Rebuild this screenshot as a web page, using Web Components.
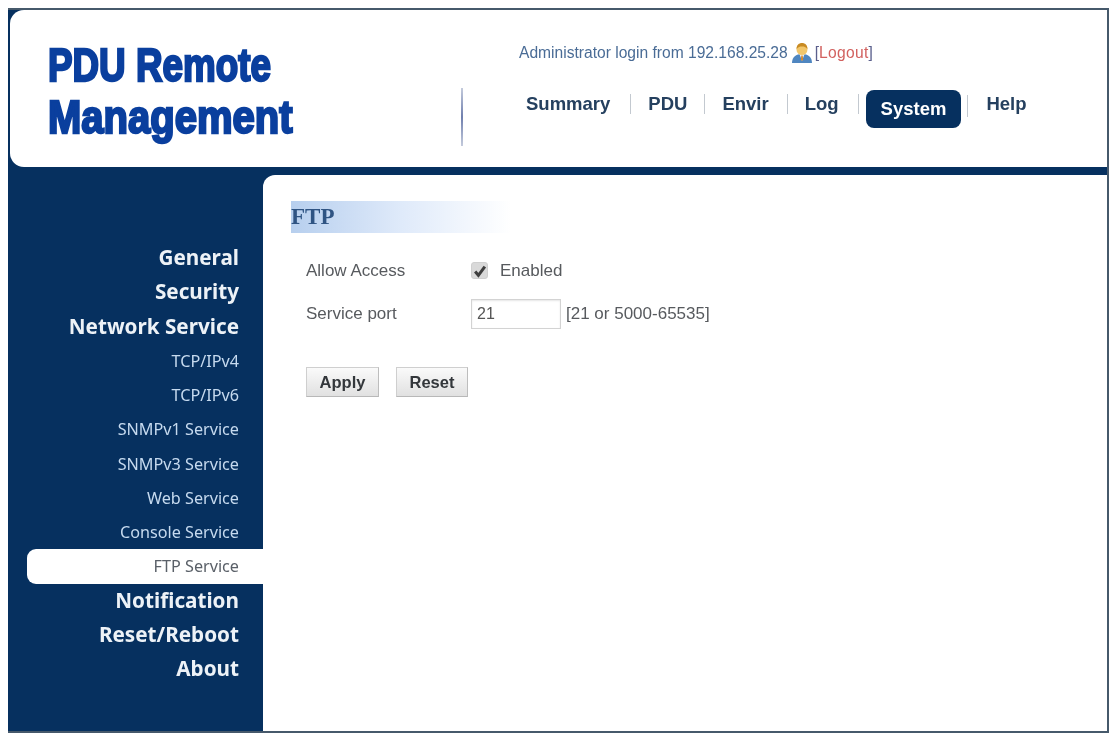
<!DOCTYPE html>
<html lang="en"><head><meta charset="utf-8"><title>PDU Remote Management</title>
<style>
html{overflow:hidden;background:#fff}
body{margin:8px 3px 0 8px;background:#fff}
</style></head><body>
<pdu-app>
  <pdu-header slot="header">
    <span slot="title" style="--sx:.8">PDU Remote</span><span slot="title" style="--sx:.87">Management</span>
    <pdu-login slot="login"></pdu-login>
    <pdu-nav slot="nav">
      <nav-link style="--ml:20px">Summary</nav-link><nav-link style="--ml:17px">PDU</nav-link><nav-link style="--ml:18px">Envir</nav-link><nav-link style="--ml:19px">Log</nav-link><nav-link active>System</nav-link><nav-link>Help</nav-link>
    </pdu-nav>
  </pdu-header>
  <pdu-sidebar slot="sidebar">
    <side-item main>General</side-item>
    <side-item main>Security</side-item>
    <side-item main>Network Service</side-item>
    <side-item>TCP/IPv4</side-item>
    <side-item>TCP/IPv6</side-item>
    <side-item>SNMPv1 Service</side-item>
    <side-item>SNMPv3 Service</side-item>
    <side-item>Web Service</side-item>
    <side-item>Console Service</side-item>
    <side-item active>FTP Service</side-item>
    <side-item main>Notification</side-item>
    <side-item main>Reset/Reboot</side-item>
    <side-item main>About</side-item>
  </pdu-sidebar>
  <ftp-panel slot="content"></ftp-panel>
</pdu-app>
<script>
function def(name, html){
  customElements.define(name, class extends HTMLElement{
    constructor(){super();this.attachShadow({mode:'open'}).innerHTML=html;}
  });
}
def('pdu-app',`<style>
:host{display:flex;flex-direction:column;box-sizing:border-box;width:1101px;height:725px;background:#06305f;
 border:solid #46596b;border-width:2px 2px 2px 0;font-family:"Liberation Sans",Arial,sans-serif;filter:blur(.45px)}
.main{flex:1;display:flex;min-height:0;margin-top:8px}
.content{flex:1;background:#fff;border-top-left-radius:12px}
</style><slot name="header"></slot><div class="main"><slot name="sidebar"></slot><div class="content"><slot name="content"></slot></div></div>`);
def('pdu-header',`<style>
:host{display:flex;height:157px;margin-left:2px;background:#fff;border-radius:14px 0 0 14px;flex:none}
.title{width:415px;flex:none;box-sizing:border-box;padding:29px 0 0 38px}
::slotted([slot=title]){display:block;font-family:"Liberation Sans",Arial,sans-serif;font-weight:700;font-size:46px;line-height:52px;height:52px;
 color:#0a3f9e;-webkit-text-stroke:2.4px #0a3f9e;transform:scaleX(var(--sx,.85));transform-origin:left center;white-space:nowrap}
.rule{width:2px;height:58px;margin:78px 0 0 36px;flex:none;background:linear-gradient(#c4cbdc,#6f7fae 50%,#c4cbdc)}
.right{flex:1;padding:33px 0 0 54px;min-width:0}
</style><div class="title"><slot name="title"></slot></div><div class="rule"></div>
<div class="right"><slot name="login"></slot><slot name="nav"></slot></div>`);
def('pdu-login',`<style>
:host{display:block;height:22px;color:#4a6c96;font-size:15.600px;line-height:20px;white-space:nowrap;margin-left:2px}
.w{display:inline-flex;align-items:center}
svg{width:20px;height:20px;margin:0 3px 0 4px}
.l{color:#d2615f;letter-spacing:.3px}.b{color:#5a5f8c}
</style><span class="w">Administrator login from 192.168.25.28<svg viewBox="0 0 20 20"><path d="M0 20c0-6 4-9 10-9s10 3 10 9z" fill="#4f86c0"/><path d="M7.500 11h5L10 18z" fill="#f4f4f4"/><path d="M9.300 12.500h1.400l.5 4L10 18l-1.200-1.500z" fill="#d98a2c"/><ellipse cx="10" cy="6.500" rx="5.500" ry="5.500" fill="#f2c66b"/><path d="M4.500 6c0-4 2.500-6 5.500-6s5.500 2 5.500 6c-2-2-3-2.500-5.500-2.500S6.500 4 4.500 6z" fill="#c88a22"/></svg><span><span class="b">[</span><span class="l">Logout</span><span class="b">]</span></span></span>`);
def('pdu-nav',`<style>
:host{display:flex;align-items:flex-start;margin:24px 0 0 9px;font-size:18.500px;font-weight:700;color:#25405f;height:44px}
</style><slot></slot>`);
def('nav-link',`<style>
:host{display:flex;align-items:center;height:30px;white-space:nowrap;line-height:22px}
:host(:not(:last-child))::after{content:"";width:1px;height:20px;background:#c3c9d0;margin:0 17px 0 var(--ml,18px)}
:host([active]){height:38px;margin:0 0 0 -10px}
:host([active])::after{margin:-4px 18px 0 6px;align-self:center;height:22px}
.t{display:block}
:host([active]) .t{background:#06305f;color:#fff;border-radius:8px;padding:8px 15px;margin-top:2px}
</style><span class="t"><slot></slot></span>`);
def('pdu-sidebar',`<style>
:host{display:block;width:253px;flex:none;margin-left:2px;box-sizing:border-box;padding:66px 0 0 17px}
</style><slot></slot>`);
def('side-item',`<style>
:host{display:block;height:34.250px;line-height:34px;text-align:right;padding-right:24px;box-sizing:border-box;
 font-family:"Noto Sans","Open Sans",sans-serif;font-size:16.200px;color:#c6daef;white-space:nowrap}
:host([main]){font-size:20.700px;line-height:32.500px;font-weight:700;color:#edf2f7}
:host([active]){background:#fff;color:#5a6068;border-radius:9px 0 0 9px}
</style><slot></slot>`);
def('form-row',`<style>
:host{display:flex;align-items:center;height:43px;color:#575a5e;font-size:17px}
.k{width:165px;flex:none}.v{display:flex;align-items:center}
</style><span class="k"><slot name="k"></slot></span><span class="v"><slot></slot></span>`);
def('push-btn',`<style>
:host{display:flex;align-items:center;justify-content:center;height:30px;box-sizing:border-box;font-weight:700;font-size:16.500px;color:#33373b;
 background:linear-gradient(#fafafa,#e1e1e1);border:1px solid #cfcfcf;border-bottom-color:#b8b8b8;border-right-color:#bdbdbd}
</style><slot></slot>`);
def('ftp-panel',`<style>
:host{display:block;padding:26px 0 0 28px}
h2{margin:0;width:220px;height:32px;box-sizing:border-box;font:700 23px/31px "Liberation Serif","Times New Roman",serif;color:#2f5483;
 background:linear-gradient(90deg,#b7cfee,#dfeafa 50%,#fff)}
.form{padding:16px 0 0 15px}
.chk{width:17px;height:17px;box-sizing:border-box;border-radius:3px;background:#d9d9d9;border:1px solid #cfcfcf;display:flex;align-items:center;justify-content:center;margin-right:12px}
.chk svg{width:14px;height:14px}
.in{width:90px;height:30px;box-sizing:border-box;border:1px solid #d3d3d3;box-shadow:inset 0 1px 2px #e6e6e6;display:flex;align-items:center;padding-left:5px;margin-right:5px;color:#555;font-size:16px}
.btns{display:flex;gap:17px;margin-top:32px}
.a{width:73px}.r{width:72px}
</style><h2>FTP</h2><div class="form">
<form-row><span slot="k">Allow Access</span><span class="chk"><svg viewBox="0 0 13 13"><path d="M2 7l3 3.500L11 2.500" fill="none" stroke="#3e3e3e" stroke-width="2.800"/></svg></span><span>Enabled</span></form-row>
<form-row><span slot="k">Service port</span><span class="in">21</span><span>[21 or 5000-65535]</span></form-row>
<div class="btns"><push-btn class="a">Apply</push-btn><push-btn class="r">Reset</push-btn></div></div>`);
</script>
</body></html>
